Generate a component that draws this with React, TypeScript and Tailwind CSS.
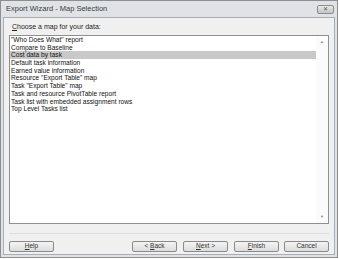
const items = [
  '"Who Does What" report',
  'Compare to Baseline',
  'Cost data by task',
  'Default task information',
  'Earned value information',
  'Resource "Export Table" map',
  'Task "Export Table" map',
  'Task and resource PivotTable report',
  'Task list with embedded assignment rows',
  'Top Level Tasks list',
];

function Btn({ label, u }: { label: string; u: number }) {
  return (
    <button className="w-[45px] h-[11px] border border-[#8a8a8a] rounded-[2px] bg-gradient-to-b from-[#f4f4f4] to-[#dcdcdc] text-[6.5px] leading-none text-[#333] flex items-center justify-center whitespace-pre">
      {u < 0 ? (
        label
      ) : (
        <>
          {label.slice(0, u)}
          <span className="underline">{label[u]}</span>
          {label.slice(u + 1)}
        </>
      )}
    </button>
  );
}

export default function App() {
  return (
    <div className="w-[339px] h-[259px] bg-white font-['Liberation_Sans',sans-serif]">
      <div className="w-[338px] h-[258px] border border-[#8e8e8e] bg-[#dfe3e8] flex flex-col px-[2px] pb-[2px]">
        {/* Title bar */}
        <div className="h-[16px] flex items-center justify-between pl-[3px] pr-[1px]">
          <span className="text-[7.5px] text-[#3a3a3a]">Export Wizard - Map Selection</span>
          <div className="w-[17px] h-[9px] border border-[#8c8c8c] rounded-[2px] bg-gradient-to-b from-[#e8e8e8] to-[#c4c4c4] flex items-center justify-center text-[6px] leading-none text-[#555]">
            ✕
          </div>
        </div>

        {/* Client area */}
        <div className="flex-1 border border-[#a8aeb5] bg-[#f0f0f0] flex flex-col px-[5px] pt-[3px]">
          <div className="text-[7px] text-[#222] pl-[3px] h-[12px] flex items-center">
            <span className="underline">C</span>hoose a map for your data:
          </div>
          <div className="mt-[2px] h-[189px] border border-[#8f8f8f] bg-white flex">
            <div className="flex-1">
              {items.map((it, i) => (
                <div
                  key={i}
                  className={`h-[7.7px] pl-[1px] text-[6.6px] leading-[7.7px] whitespace-nowrap text-[#111] ${i === 2 ? 'bg-[#c9c9c9]' : ''}`}
                >
                  {it}
                </div>
              ))}
            </div>
            <div className="w-[12px] bg-[#fbfbfb] flex flex-col justify-between items-center py-[3px] text-[4px] text-[#888]">
              <span>▲</span>
              <span>▼</span>
            </div>
          </div>
          <div className="mt-[9px] border-t border-[#dcdcdc]" />
          <div className="mt-[7px] flex items-center">
            <Btn label="Help" u={0} />
            <div className="flex-1" />
            <Btn label="< Back" u={2} />
            <div className="w-[6px]" />
            <Btn label="Next >" u={0} />
            <div className="w-[6px]" />
            <Btn label="Finish" u={0} />
            <div className="w-[5px]" />
            <Btn label="Cancel" u={-1} />
          </div>
        </div>
      </div>
    </div>
  );
}
